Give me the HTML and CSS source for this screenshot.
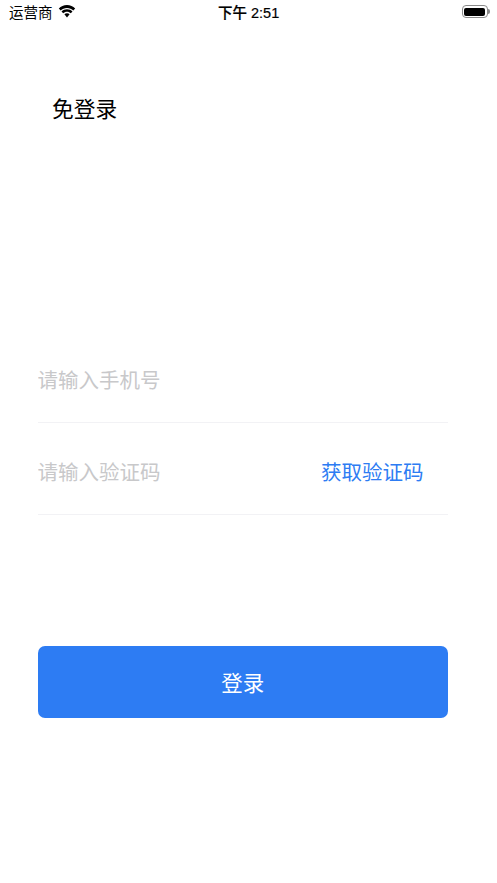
FILE: index.html
```html
<!DOCTYPE html>
<html lang="zh-CN">
<head>
  <meta charset="UTF-8" />
  <meta name="viewport" content="width=device-width, initial-scale=1.0"/>
  <title>免登录</title>
  <link rel="stylesheet" href="styles.css">
</head>
<body>
  <div class="status-bar">
    <div class="status-left">
      <span class="carrier">运营商</span>
      <svg class="wifi" viewBox="0 0 18 13" width="18" height="13">
        <path d="M9 3c2.500 0 4.700 1 6.300 2.600l1.900-2C15.100 1.400 12.200 0 9 0S2.900 1.400.8 3.600l1.900 2C4.300 4 6.500 3 9 3z"/>
        <path d="M9 6.800c1.500 0 2.800.6 3.800 1.500l1.700-1.800C13.100 5.100 11.100 4.200 9 4.200s-4.100.9-5.500 2.300l1.700 1.800c1-.9 2.300-1.500 3.800-1.500z"/>
        <path d="M9 8.300c-1 0-1.900.4-2.600 1L9 12.500l2.600-3.200c-.7-.6-1.600-1-2.600-1z"/>
      </svg>
    </div>
    <span class="clock">下午 2:51</span>
    <div class="battery"><span class="battery-level"></span></div>
  </div>

  <h1 class="title">免登录</h1>

  <form class="login-form">
    <div class="field">
      <input class="field-input" type="text" placeholder="请输入手机号">
    </div>
    <div class="field field-code">
      <input class="field-input" type="text" placeholder="请输入验证码">
      <span class="get-code">获取验证码</span>
    </div>
    <button class="login-btn" type="button">登录</button>
  </form>
</body>
</html>
```

FILE: styles.css
```css
* {
  box-sizing: border-box;
}

body {
  margin: 0;
  height: 883px;
  overflow: hidden;
  background: #fff;
  color: #000;
  font-family: "Liberation Sans", "Noto Sans CJK SC", sans-serif;
}

.status-bar {
  display: flex;
  align-items: flex-start;
  justify-content: space-between;
  height: 26px;
  padding: 5px 9.500px 0 9px;
  position: relative;
  font-size: 14.500px;
}

.status-left {
  display: flex;
  align-items: flex-start;
  gap: 5px;
}

.carrier {
  line-height: 16px;
}

.wifi {
  fill: #000;
}

.clock {
  position: absolute;
  left: 218px;
  top: 5px;
  line-height: 16px;
  font-weight: 500;
  -webkit-text-stroke: 0.2px #000;
}

.battery {
  position: relative;
  width: 26px;
  height: 13px;
  padding: 1.500px;
  border: 1px solid #8a8a8a;
  border-radius: 4px;
}

.battery::after {
  content: "";
  position: absolute;
  right: -3px;
  top: 3px;
  width: 2px;
  height: 5px;
  background: #8a8a8a;
  border-radius: 0 2px 2px 0;
}

.battery-level {
  display: block;
  height: 100%;
  background: #000;
  border-radius: 2px;
}

.title {
  margin: 69px 0 0 52px;
  font-size: 21.700px;
  line-height: 30px;
  font-weight: 400;
}

.login-form {
  margin: 205px 49px 0 37.500px;
}

.field {
  display: flex;
  align-items: center;
  height: 93px;
  padding-top: 5px;
  border-bottom: 1px solid #f2f2f5;
  font-family: "Noto Sans CJK SC", sans-serif;
  font-size: 20.500px;
  line-height: 30px;
}

.field-code {
  height: 92px;
  padding-right: 24.500px;
}

.field-input {
  flex: 1;
  min-width: 0;
  height: 30px;
  padding: 0;
  border: none;
  outline: none;
  background: none;
  font: inherit;
}

.field-input::placeholder {
  color: #c8c8ca;
  opacity: 1;
}

.get-code {
  color: #2d7cf3;
}

.login-btn {
  display: block;
  width: 100%;
  height: 72.500px;
  margin-top: 130.500px;
  border: none;
  border-radius: 7px;
  background: #2d7cf3;
  color: #fff;
  font: inherit;
  font-size: 21.500px;
}
```
